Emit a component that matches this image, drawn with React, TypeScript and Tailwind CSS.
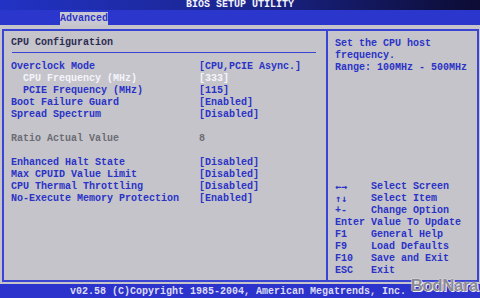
import React from "react";

const options: { label: string; value: string; indent?: boolean; selected?: boolean; muted?: boolean }[] = [
  { label: "Overclock Mode", value: "[CPU,PCIE Async.]" },
  { label: "CPU Frequency (MHz)", value: "[333]", indent: true, selected: true },
  { label: "PCIE Frequency (MHz)", value: "[115]", indent: true },
  { label: "Boot Failure Guard", value: "[Enabled]" },
  { label: "Spread Spectrum", value: "[Disabled]" },
  { label: "", value: "" },
  { label: "Ratio Actual Value", value: "8", muted: true },
  { label: "", value: "" },
  { label: "Enhanced Halt State", value: "[Disabled]" },
  { label: "Max CPUID Value Limit", value: "[Disabled]" },
  { label: "CPU Thermal Throttling", value: "[Disabled]" },
  { label: "No-Execute Memory Protection", value: "[Enabled]" },
];

const keys: [string, string, boolean?][] = [
  ["\u2190\u2192", "Select Screen", true],
  ["\u2191\u2193", "Select Item", true],
  ["+-", "Change Option"],
  ["Enter", "Value To Update"],
  ["F1", "General Help"],
  ["F9", "Load Defaults"],
  ["F10", "Save and Exit"],
  ["ESC", "Exit"],
];

const App = () => {
  return (
    <div
      className="relative w-[480px] h-[298px] flex flex-col overflow-hidden bg-[#c4c4ca] text-[10px] leading-[12px] font-bold text-[#2b33c6]"
      style={{ fontFamily: '"Liberation Mono", "DejaVu Sans Mono", monospace' }}
    >
      {/* title bar */}
      <div className="h-[10px] bg-gradient-to-r from-[#2232c4] via-[#1a2590] to-[#0c0c34] flex justify-center">
        <span className="text-[#f2f2fa] leading-[10px]">BIOS SETUP UTILITY</span>
      </div>

      {/* tab bar */}
      <div className="h-[15px] bg-[#2a36cc] flex items-end">
        <div className="ml-[60px] w-[48px] h-[13px] bg-[#c8c8d2] text-[#2b33c6] leading-[13px] text-center">
          Advanced
        </div>
      </div>

      {/* main */}
      <div className="flex-1 pt-[4px] pl-[2px] pr-[1px] pb-[2px]">
        <div className="h-full flex border-2 border-[#3a44d4]">
          <div className="w-[324px] border-r-2 border-[#3a44d4] pt-[6px] pl-[7px] pr-[10px]">
            <div className="text-[#2c2c52]">CPU Configuration</div>
            <div className="mt-[3px] ml-[1px] h-[1px] bg-[#3a44d4]" />
            <div className="mt-[8px]">
              {options.map((o, i) => (
                <div
                  key={i}
                  className={
                    "flex h-[12px] whitespace-pre " +
                    (o.selected ? "text-[#f4f4fc]" : o.muted ? "text-[#6c6c74]" : "")
                  }
                >
                  <span className={"w-[188px] " + (o.indent ? "pl-[12px]" : "")}>{o.label}</span>
                  <span>{o.value}</span>
                </div>
              ))}
            </div>
          </div>

          <div className="flex-1 pl-[7px] pt-[7px] flex flex-col">
            <div>Set the CPU host</div>
            <div>frequency.</div>
            <div>Range: 100MHz - 500MHz</div>
            <div className="mt-[107px]">
              {keys.map(([k, d, arrow]) => (
                <div key={k} className="flex h-[12px] whitespace-pre">
                  <span
                    className="w-[36px]"
                    style={arrow ? { fontFamily: '"DejaVu Sans Mono", monospace' } : undefined}
                  >
                    {k}
                  </span>
                  <span>{d}</span>
                </div>
              ))}
            </div>
          </div>
        </div>
      </div>

      {/* bottom bar */}
      <div className="h-[14px] bg-[#2c32cc] flex justify-center">
        <span className="text-[#dcdcf4] leading-[15px] pr-[4px]">
          v02.58 (C)Copyright 1985-2004, American Megatrends, Inc.
        </span>
      </div>

      {/* watermark */}
      <div
        className="absolute right-[2px] bottom-[2px] text-[17px] leading-[20px] font-black text-[#8a8a92] tracking-[-0.5px] [text-shadow:0_0_1px_#fff,0_0_1px_#fff,1px_1px_0_#eee]"
        style={{ fontFamily: '"Liberation Sans", Arial, sans-serif' }}
      >
        BodNara
      </div>
    </div>
  );
};

export default App;
